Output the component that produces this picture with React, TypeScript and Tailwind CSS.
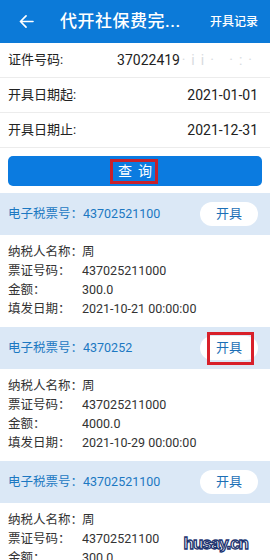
import React from 'react';

interface Ticket {
    no: string;
    name: string;
    voucher: string;
    amount: string;
    date: string;
    marked?: boolean;
}

const tickets: Ticket[] = [
    { no: '43702521100', name: '周', voucher: '437025211000', amount: '300.0', date: '2021-10-21 00:00:00' },
    { no: '4370252', name: '周', voucher: '437025211000', amount: '4000.0', date: '2021-10-29 00:00:00', marked: true },
    { no: '43702521100', name: '周', voucher: '43702521100', amount: '300.0', date: '2021-11-02 00:00:00' },
];

const FormRow: React.FC<{ label: string; children: React.ReactNode }> = ({ label, children }) => (
    <div className="flex items-center justify-between h-[35px] pl-2 pr-3 border-b border-[#ececec] text-[#222]">
        <span className="text-[13px]">{label}</span>
        <div className="text-[14px]">{children}</div>
    </div>
);

const TicketCard: React.FC<{ t: Ticket }> = ({ t }) => (
    <div>
        <div className="flex items-center justify-between h-[42px] pl-2 pr-3 bg-[#dbe8f6] text-[12.5px] text-[#1c78c2]">
            <div className="flex items-center whitespace-nowrap">
                <span>电子税票号：</span>
                <span>{t.no}</span>
            </div>
            <div className="relative">
                <button className="w-[58px] h-6 rounded-full bg-white text-[13px] text-[#1c6fb6]">开具</button>
                {t.marked && (
                    <div className="absolute -top-[4px] left-[7px] w-[47px] h-[33px] border-[3px] border-[#d8202a]" />
                )}
            </div>
        </div>
        <div className="px-2 pt-2 pb-2 text-[12.5px] text-[#333]">
            {[
                ['纳税人名称：', t.name],
                ['票证号码：', t.voucher],
                ['金额：', t.amount],
                ['填发日期：', t.date],
            ].map(([k, v]) => (
                <div key={k} className="flex items-center h-[19px] whitespace-nowrap">
                    <span className="w-[74px] shrink-0">{k}</span>
                    <span>{v}</span>
                </div>
            ))}
        </div>
    </div>
);

export default function App() {
    return (
        <div className="relative w-[270px] h-[560px] overflow-hidden bg-white font-['Roboto','Noto_Sans_CJK_SC',sans-serif]">
            {/* header */}
            <div className="flex items-center h-[43px] bg-[#0c7ad8] text-white">
                <div className="w-[56px] flex justify-center pr-1">
                    <svg width="15" height="13" viewBox="0 0 16 14" fill="none" stroke="white" strokeWidth="1.8" strokeLinecap="round" strokeLinejoin="round">
                        <path d="M15 7H1.5M7.5 1L1.5 7l6 6" />
                    </svg>
                </div>
                <div className="flex-1 pl-1 text-[17px] font-medium tracking-[0.5px]">代开社保费完...</div>
                <div className="pr-3 text-[12px] font-medium">开具记录</div>
            </div>

            {/* query form */}
            <FormRow label="证件号码:">
                <div className="flex items-center">
                    <span>37022419</span>
                    <span className="w-[78px] text-right text-[#d8dbe0] tracking-[6px]">·ii· ·:·</span>
                </div>
            </FormRow>
            <FormRow label="开具日期起:">
                <span>2021-01-01</span>
            </FormRow>
            <FormRow label="开具日期止:">
                <span>2021-12-31</span>
            </FormRow>

            <div className="px-2 pt-2 pb-[7px]">
                <button className="relative w-full h-[30px] rounded-[5px] bg-[#0b7be0] text-white text-[14px] tracking-[6px] flex items-center justify-center">
                    <span className="pl-[6px]">查询</span>
                    <span className="absolute left-[102px] top-[3px] w-[48px] h-[25px] border-[3px] border-[#c8202a]" />
                </button>
            </div>

            {tickets.map((t, i) => (
                <TicketCard key={i} t={t} />
            ))}

            {/* watermark */}
            <div className="absolute right-[22px] bottom-[8px] text-[17px] leading-none font-black text-white tracking-[-1px] [-webkit-text-stroke:1.3px_#1d3470] font-['Liberation_Sans',sans-serif]">
                husay.cn
            </div>
        </div>
    );
}
